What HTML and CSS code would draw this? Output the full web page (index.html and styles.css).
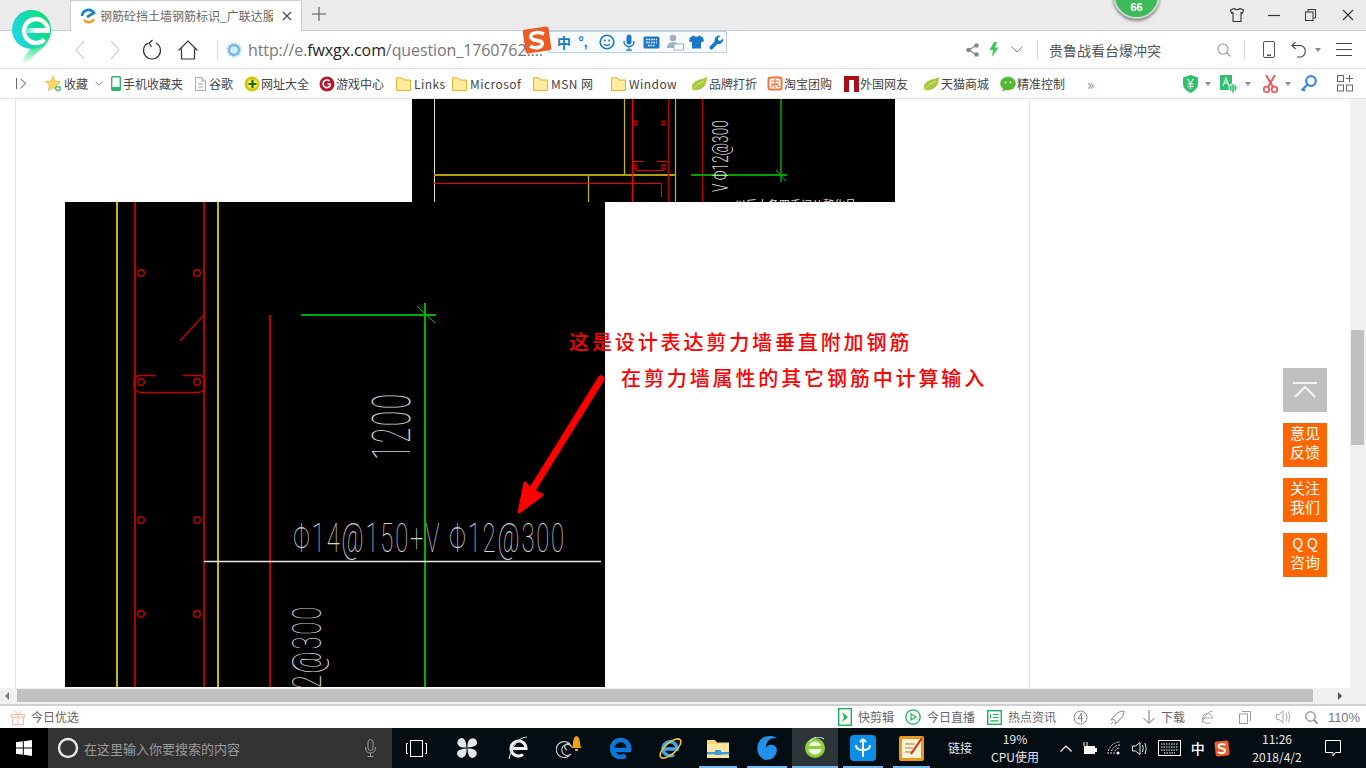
FILE: index.html
```html
<!DOCTYPE html>
<html lang="zh-CN">
<head>
<meta charset="utf-8">
<title>钢筋砼挡土墙钢筋标识_广联达服务新干线</title>
<link rel="stylesheet" href="styles.css">
</head>
<body>
<div class="app">
  <svg class="logo" width="48" height="56" viewBox="0 0 48 56">
    <defs>
      <linearGradient id="lg" x1="0" y1="0.7" x2="1" y2="0.3"><stop offset="0" stop-color="#22d4ea"/><stop offset="0.55" stop-color="#14dca4"/><stop offset="1" stop-color="#08e26a"/></linearGradient>
      <linearGradient id="lt" x1="0" y1="0" x2="0" y2="1"><stop offset="0" stop-color="#0ae070"/><stop offset="0.55" stop-color="#4ee89a"/><stop offset="1" stop-color="#e8fbf0"/></linearGradient>
      <linearGradient id="lb" x1="0" y1="0" x2="1" y2="0"><stop offset="0" stop-color="#fff" stop-opacity="0"/><stop offset="0.5" stop-color="#fff"/><stop offset="1" stop-color="#fff"/></linearGradient>
    </defs>
    <path d="M40 24 Q39 36 28 44 L17 55 H10 L22 38 Z" fill="url(#lt)"/>
    <circle cx="20.5" cy="22.5" r="19.5" fill="url(#lg)"/>
    <rect x="11" y="21" width="28" height="5" fill="url(#lb)"/>
    <path d="M37 23 A12 12 0 1 0 33.5 32.5" fill="none" stroke="#fff" stroke-width="4.4"/>
  </svg>

  <div class="badge">66</div>

  <div class="sogou">
    <svg class="sogou-s" width="30" height="28" viewBox="0 0 30 28"><rect x="2" y="2" width="26" height="24" rx="2" transform="rotate(-8 15 14)" fill="#ee5a24"/><path d="M22 8 Q15 5 10 8 Q7 11 11 13.5 L19 15.5 Q22 18 18 21 Q13 23 8 20" fill="none" stroke="#fff" stroke-width="3.6"/></svg>
    <div class="sogou-bar">
      <span class="sg-zh">中</span>
      <span class="sg-dot">°,</span>
      <svg width="16" height="16" viewBox="0 0 16 16"><circle cx="8" cy="8" r="6.8" fill="none" stroke="#1b78c8" stroke-width="1.6"/><circle cx="5.8" cy="6.5" r="1" fill="#1b78c8"/><circle cx="10.2" cy="6.5" r="1" fill="#1b78c8"/><path d="M4.8 10 Q8 13 11.2 10" fill="none" stroke="#1b78c8" stroke-width="1.2"/></svg>
      <svg width="14" height="17" viewBox="0 0 14 17"><rect x="4.5" y="0.5" width="5" height="10" rx="2.5" fill="#1b78c8"/><path d="M2 7 Q2 12.5 7 12.5 Q12 12.5 12 7 M7 12.5 V16 M4 16.2 H10" fill="none" stroke="#1b78c8" stroke-width="1.3"/></svg>
      <svg width="17" height="13" viewBox="0 0 17 13"><rect x="0.5" y="0.5" width="16" height="12" rx="1.5" fill="#1b78c8"/><path d="M3 3.5 H14 M3 6.5 H14 M5 9.5 H12" stroke="#fff" stroke-width="1.3" stroke-dasharray="1.6 .9"/></svg>
      <svg width="18" height="17" viewBox="0 0 18 17"><circle cx="7" cy="4" r="3.2" fill="#9db2c4"/><path d="M1 14 Q1 8 7 8 Q11 8 12 10 V14 Z" fill="#9db2c4"/><rect x="8" y="10" width="9.5" height="6" fill="#fff" stroke="#9db2c4"/></svg>
      <svg width="15" height="14" viewBox="0 0 15 14"><path d="M4.5 0.5 L1 2.5 L0 6.5 L3 7 V13.5 H12 V7 L15 6.5 L14 2.5 L10.5 0.5 Q7.5 3 4.5 .5 Z" fill="#1b78c8"/></svg>
      <svg width="15" height="15" viewBox="0 0 15 15"><path d="M14 3.5 L11 6 L9 5 L9 3 L11.5 0.8 A4.5 4.5 0 0 0 5.8 6.5 L.8 11.5 Q0 13 1 14 Q2 15 3.5 14 L8.5 9 A4.5 4.5 0 0 0 14 3.5 Z" fill="#1b78c8"/></svg>
    </div>
  </div>

  <header class="titlebar">
    <div class="tab">
      <svg class="tab-ico" width="16" height="16" viewBox="0 0 16 16"><path d="M2 8 A6.5 6.5 0 0 1 14 5 L7 9" fill="none" stroke="#1c7fd0" stroke-width="2.6"/><path d="M4 12 A6 6 0 0 0 14 11" fill="none" stroke="#f0a020" stroke-width="2.6"/></svg>
      <span class="tab-title">钢筋砼挡土墙钢筋标识_广联达服</span>
      <svg class="tab-x" width="10" height="10" viewBox="0 0 10 10"><path d="M1 1 L9 9 M9 1 L1 9" stroke="#444" stroke-width="1.1"/></svg>
    </div>
    <svg class="newtab" width="14" height="14" viewBox="0 0 14 14"><path d="M7 0 V14 M0 7 H14" stroke="#555" stroke-width="1.1"/></svg>
    <div class="winctl">
      <svg width="16" height="16" viewBox="0 0 16 16"><path d="M5 1.5 L1.5 3 L2.5 6 L4 5.5 V14.5 H12 V5.5 L13.5 6 L14.5 3 L11 1.5 Q8 4 5 1.5 Z" fill="none" stroke="#333" stroke-width="1.1"/></svg>
      <svg width="12" height="12" viewBox="0 0 12 12"><path d="M0 6.5 H12" stroke="#333" stroke-width="1.2"/></svg>
      <svg width="11" height="12" viewBox="0 0 11 12"><rect x="0.5" y="3" width="7.5" height="8.5" fill="#ebebeb" stroke="#333"/><path d="M3 3 V.5 H10.5 V9 H8" fill="none" stroke="#333"/></svg>
      <svg width="12" height="12" viewBox="0 0 12 12"><path d="M1 1 L11 11 M11 1 L1 11" stroke="#333" stroke-width="1.1"/></svg>
    </div>
  </header>

  <nav class="navbar">
    <svg width="12" height="20" class="n-back" viewBox="0 0 12 20"><path d="M10 1 L2 10 L10 19" fill="none" stroke="#d0d0d0" stroke-width="1.2"/></svg>
    <svg width="12" height="20" class="n-fwd" viewBox="0 0 12 20"><path d="M2 1 L10 10 L2 19" fill="none" stroke="#d0d0d0" stroke-width="1.2"/></svg>
    <svg width="20" height="22" class="n-reload" viewBox="0 0 20 22"><path d="M6 4 A8.5 8.5 0 1 0 14 4 M10.5 1 L7 4.2 L9.5 8" fill="none" stroke="#333" stroke-width="1.2"/></svg>
    <svg width="20" height="20" class="n-home" viewBox="0 0 20 20"><path d="M0.5 10.5 L10 1 L19.5 10.5 M3.5 8.5 V19 H16.5 V8.5" fill="none" stroke="#333" stroke-width="1.2"/></svg>
    <i class="n-div"></i>
    <svg width="16" height="16" class="n-globe" viewBox="0 0 16 16"><circle cx="8" cy="8" r="5" fill="#d8edfb" stroke="#6db8ea" stroke-width="2.4"/><circle cx="8" cy="8" r="6.8" fill="none" stroke="#a9d6f4" stroke-dasharray="2 1.6" stroke-width="1.6"/></svg>
    <div class="url">http://e.<b>fwxgx.com</b>/question_1760762....</div>
    <svg width="13" height="14" class="n-share" viewBox="0 0 13 14"><path d="M10 2.5 L3 7 L10 11.5" fill="none" stroke="#888" stroke-width="1.2"/><circle cx="10.5" cy="2.5" r="2.3" fill="#888"/><circle cx="2.5" cy="7" r="2.3" fill="#888"/><circle cx="10.5" cy="11.5" r="2.3" fill="#888"/></svg>
    <svg width="10" height="15" class="n-bolt" viewBox="0 0 10 15"><path d="M5 0 L0.5 8 H4 L3 15 L9.5 5.5 H6 L8 0 Z" fill="#3cc55a"/></svg>
    <svg width="12" height="7" class="n-chev" viewBox="0 0 12 7"><path d="M.5 .5 L6 6 L11.5 .5" fill="none" stroke="#888"/></svg>
    <i class="n-div2"></i>
    <div class="hot">贵鲁战看台爆冲突</div>
    <svg width="14" height="14" class="n-search" viewBox="0 0 14 14"><circle cx="6" cy="6" r="5" fill="none" stroke="#999" stroke-width="1.1"/><path d="M9.5 9.5 L13.5 13.5" stroke="#999" stroke-width="1.2"/></svg>
    <i class="n-div3"></i>
    <svg width="12" height="17" class="n-phone" viewBox="0 0 12 17"><rect x=".5" y=".5" width="11" height="16" rx="1.5" fill="none" stroke="#555"/><rect x="4" y="13.5" width="4" height="1.6" fill="#555"/></svg>
    <svg width="16" height="17" class="n-undo" viewBox="0 0 16 17"><path d="M1 4.5 H10 A6 6 0 0 1 10 16 H6 M4.5 .8 L1 4.5 L4.5 8" fill="none" stroke="#444" stroke-width="1.1"/></svg>
    <i class="caret n-caret"></i>
    <svg width="16" height="13" class="n-menu" viewBox="0 0 16 13"><path d="M0 .5 H16 M0 6.5 H16 M0 12.5 H16" stroke="#444"/></svg>
  </nav>

  <div class="bookmarks">
    <div class="bm bm-toggle"><svg width="12" height="11" viewBox="0 0 12 11"><path d="M.5 0 V11 M4.5 1 L10 5.5 L4.5 10" fill="none" stroke="#666"/></svg></div>
    <div class="bm"><svg width="18" height="18" viewBox="0 0 18 18"><path d="M8 1 L10.2 6 L15.5 6.6 L11.6 10.2 L12.7 15.5 L8 12.8 L3.3 15.5 L4.4 10.2 L.5 6.6 L5.8 6 Z" fill="#f8d860" stroke="#d8b030" stroke-width=".6"/><circle cx="13" cy="13.5" r="3" fill="#4cc080"/><path d="M13 11.5 V15.5 M11 13.5 H15" stroke="#fff"/></svg><span>收藏</span><svg class="bm-chev" width="8" height="5" viewBox="0 0 8 5"><path d="M.5 .5 L4 4 L7.5 .5" fill="none" stroke="#999"/></svg></div>
    <div class="bm"><svg width="10" height="15" viewBox="0 0 10 15"><rect x=".7" y=".7" width="8.6" height="13.6" rx="1" fill="#fff" stroke="#2fb86a" stroke-width="1.4"/><rect x=".7" y="11" width="8.6" height="3.3" fill="#2fb86a"/></svg><span>手机收藏夹</span></div>
    <div class="bm"><svg width="11" height="14" viewBox="0 0 11 14"><path d="M.5 .5 H7 L10.5 4 V13.5 H.5 Z M7 .5 V4 H10.5 M3 7 H8 M3 10 H8" fill="#fafafa" stroke="#aaa"/></svg><span>谷歌</span></div>
    <div class="bm"><svg width="16" height="16" viewBox="0 0 16 16"><circle cx="8" cy="8" r="7.5" fill="#d8c800"/><circle cx="8.5" cy="8" r="5" fill="#f6e85a"/><path d="M8.5 3.8 V12.2 M4.5 8 H12.5" stroke="#166c22" stroke-width="2.2"/></svg><span>网址大全</span></div>
    <div class="bm"><svg width="16" height="16" viewBox="0 0 16 16"><circle cx="8" cy="8" r="7.5" fill="#b01c2e"/><path d="M10.5 5 A3.8 3.8 0 1 0 11 10 V8 H8.5" fill="none" stroke="#fff" stroke-width="1.6"/></svg><span>游戏中心</span></div>
    <div class="bm bm-f"><svg class="fold" width="15" height="14" viewBox="0 0 15 14"><path d="M.5 13.5 V.8 H6 L7.5 3 H14.5 V13.5 Z" fill="#ffeb9c" stroke="#e0b030"/></svg><span>Links</span></div>
    <div class="bm bm-f"><svg class="fold" width="15" height="14" viewBox="0 0 15 14"><path d="M.5 13.5 V.8 H6 L7.5 3 H14.5 V13.5 Z" fill="#ffeb9c" stroke="#e0b030"/></svg><span>Microsof</span></div>
    <div class="bm bm-f"><svg class="fold" width="15" height="14" viewBox="0 0 15 14"><path d="M.5 13.5 V.8 H6 L7.5 3 H14.5 V13.5 Z" fill="#ffeb9c" stroke="#e0b030"/></svg><span>MSN 网</span></div>
    <div class="bm bm-f"><svg class="fold" width="15" height="14" viewBox="0 0 15 14"><path d="M.5 13.5 V.8 H6 L7.5 3 H14.5 V13.5 Z" fill="#ffeb9c" stroke="#e0b030"/></svg><span>Window</span></div>
    <div class="bm"><svg width="17" height="14" viewBox="0 0 17 14"><path d="M1 13 Q0 5 7 3 Q12 2 16 0 Q16 9 10 12 Q5 14 1 13 Z" fill="#a8c840"/><path d="M1 13 Q6 7 13 4" fill="none" stroke="#d8e890"/></svg><span>品牌打折</span></div>
    <div class="bm"><svg width="16" height="16" viewBox="0 0 16 16"><rect x=".5" y=".5" width="15" height="14" rx="3" fill="#f6763a"/><rect x="2.5" y="2.5" width="11" height="10" rx="1.5" fill="#fff"/><path d="M4 5 H12 M8 3 V12 M4 8 H12 M4 11 L7 8 M12 11 L9 8" stroke="#f6763a" stroke-width="1.1"/></svg><span>淘宝团购</span></div>
    <div class="bm"><svg width="15" height="16" viewBox="0 0 15 16"><path d="M0 0 H15 V16 H10 V4 H5 V16 H0 Z" fill="#a8101c"/></svg><span>外国网友</span></div>
    <div class="bm"><svg width="17" height="14" viewBox="0 0 17 14"><path d="M1 13 Q0 5 7 3 Q12 2 16 0 Q16 9 10 12 Q5 14 1 13 Z" fill="#a8c840"/><path d="M1 13 Q6 7 13 4" fill="none" stroke="#d8e890"/></svg><span>天猫商城</span></div>
    <div class="bm"><svg width="16" height="16" viewBox="0 0 16 16"><ellipse cx="8" cy="7.5" rx="7.8" ry="6.8" fill="#52b830"/><path d="M3 12 L2.5 15.5 L7 13 Z" fill="#52b830"/><circle cx="5.5" cy="6.5" r="1" fill="#fff"/><circle cx="10.5" cy="6.5" r="1" fill="#fff"/></svg><span>精准控制</span></div>
    <div class="bm bm-more">»</div>
    <div class="bm-tools">
      <svg width="15" height="18" viewBox="0 0 15 18"><path d="M7.5 0 L15 2.5 V9 Q15 14.5 7.5 18 Q0 14.5 0 9 V2.5 Z" fill="#2fbf6e"/><path d="M4.5 4 L7.5 8 L10.5 4 M7.5 8 V14 M4.5 9 H10.5 M4.5 11.5 H10.5" fill="none" stroke="#fff" stroke-width="1.1"/></svg>
      <i class="caret"></i>
      <svg class="t-gap t-a" width="18" height="18" viewBox="0 0 18 18"><rect x="0" y="0" width="12" height="15" fill="#2fbf6e"/><path d="M3 11 L6 3 L9 11 M4 8 H8" fill="none" stroke="#fff" stroke-width="1.1"/><circle cx="13" cy="13" r="4.5" fill="#fff"/><path d="M13 9 V18 M9 13 H17 M10.5 11 H15.5 V15 H10.5 Z" fill="none" stroke="#2fbf6e" stroke-width="1.2"/></svg>
      <i class="caret"></i>
      <svg class="t-gap" width="15" height="18" viewBox="0 0 15 18"><path d="M3 0 L10 12 M12 0 L5 12" stroke="#ee5a5a" stroke-width="2"/><circle cx="3.5" cy="14.5" r="2.8" fill="none" stroke="#ee5a5a" stroke-width="1.8"/><circle cx="11.5" cy="14.5" r="2.8" fill="none" stroke="#ee5a5a" stroke-width="1.8"/></svg>
      <i class="caret"></i>
      <svg class="t-gap t-k" width="17" height="17" viewBox="0 0 17 17"><circle cx="11" cy="6" r="4.8" fill="none" stroke="#3a8ae0" stroke-width="2.2"/><path d="M7.5 9.5 L1.5 15.5 M3 14 L5 16" stroke="#3a8ae0" stroke-width="2.2" fill="none"/></svg>
      <svg class="t-gap2" width="16" height="17" viewBox="0 0 16 17"><rect x=".5" y=".5" width="6" height="6" fill="none" stroke="#666"/><rect x=".5" y="10" width="6" height="6" fill="none" stroke="#666"/><rect x="9.5" y="10" width="6" height="6" fill="none" stroke="#666"/><path d="M12.5 0 V7 M9 3.5 H16" stroke="#666"/></svg>
    </div>
  </div>

  <div class="main">
    <div class="viewport">
      <article class="sheet">
        <svg class="cad cad-a" width="483" height="103" viewBox="412 99 483 103">
          <rect x="412" y="99" width="483" height="103" fill="#000"/>
          <path d="M434.5 99 V202" stroke="#d8d8d8"/>
          <path d="M624.5 99 V175 M675.5 99 V202 M588.5 175 V202" stroke="#c8b800" stroke-width="1.2"/>
          <path d="M434 175 H675" stroke="#b0a000" stroke-width="2"/>
          <path d="M632.5 99 V202 M434 183.5 H661.5 V197" stroke="#f00000" fill="none" stroke-width="1.2"/>
          <path d="M668.5 99 V202 M702.5 99 V202" stroke="#b00000" stroke-width="1.5"/>
          <path d="M632 161.5 H644 M657 161.5 H668 M636 170.5 H664" stroke="#f00000"/>
          <rect x="634" y="121" width="3" height="4" fill="none" stroke="#f00000"/>
          <rect x="662" y="121" width="3" height="4" fill="none" stroke="#f00000"/>
          <rect x="634" y="165" width="3" height="4" fill="none" stroke="#f00000"/>
          <rect x="662" y="165" width="3" height="4" fill="none" stroke="#f00000"/>
          <path d="M691 175 H787" stroke="#00a000" stroke-width="2"/>
          <path d="M781 99 V182" stroke="#00a000" stroke-width="1.6"/>
          <path d="M776 170 L786 181" stroke="#00c000"/>
          <text class="cad-t cad-t-sm" transform="translate(728 192) rotate(-90) scale(.62 1)">V Φ12@300</text>
          <text class="cad-note" x="735" y="209">以后人备四手记从整化县</text>
        </svg>
        <svg class="cad cad-b" width="540" height="485" viewBox="65 202 540 485">
          <rect x="65" y="202" width="540" height="485" fill="#000"/>
          <path d="M117 202 V687 M218 202 V687" stroke="#c8b800" stroke-width="2"/>
          <path d="M135 202 V687 M204 202 V687 M270 315 V687" stroke="#b40000" stroke-width="2"/>
          <g fill="none" stroke="#c80000" stroke-width="1.4">
            <circle cx="141" cy="273" r="3.3"/><circle cx="197" cy="273" r="3.3"/>
            <circle cx="141" cy="382" r="3.3"/><circle cx="197" cy="382" r="3.3"/>
            <circle cx="141" cy="520" r="3.3"/><circle cx="197" cy="520" r="3.3"/>
            <circle cx="141" cy="614" r="3.3"/><circle cx="197" cy="614" r="3.3"/>
            <path d="M203 316 L180 341"/>
            <path d="M156 375.5 H140 Q134 376 134 381 V386 Q135 392 141 392.5 H198 Q205 392 205 386 V381 Q205 376 199 375.5 H183"/>
          </g>
          <path d="M301 315 H436" stroke="#00b000" stroke-width="2"/>
          <path d="M425 303 V687" stroke="#00b000" stroke-width="2"/>
          <path d="M417 306 L435 323" stroke="#00d000"/>
          <path d="M204 561.5 H601" stroke="#e8e8e8" stroke-width="1.4"/>
          <text class="cad-t cad-t-main" transform="translate(293 552) scale(.58 1)">Φ14@150+V Φ12@300</text>
          <text class="cad-t cad-t-big" transform="translate(410 460) rotate(-90) scale(.52 1)">1200</text>
          <text class="cad-t cad-t-main" transform="translate(321 722) rotate(-90) scale(.58 1)">Φ12@300</text>
          <path d="M601 379 L532 490" stroke="#f00" stroke-width="7" stroke-linecap="round"/>
          <path d="M519 512 L525 483 L530 489 L542 495 Z" fill="#f00" stroke="#f00" stroke-width="3" stroke-linejoin="round"/>
        </svg>
        <div class="note note-1">这是设计表达剪力墙垂直附加钢筋</div>
        <div class="note note-2">在剪力墙属性的其它钢筋中计算输入</div>
      </article>
      <aside class="float">
        <div class="f-top"><svg width="24" height="16" viewBox="0 0 24 16"><path d="M0 1 H24 M2 15 L12 5 L22 15" fill="none" stroke="#f4f4f4" stroke-width="2"/></svg></div>
        <div class="f-btn">意见<br>反馈</div>
        <div class="f-btn">关注<br>我们</div>
        <div class="f-btn">Q Q<br>咨询</div>
      </aside>
    </div>
    <div class="vscroll"><div class="v-thumb"></div></div>
  </div>

  <div class="hscroll">
    <i class="arr-l"></i>
    <div class="h-thumb"></div>
    <i class="arr-r"></i>
  </div>

  <footer class="status">
    <div class="st-left"><svg width="16" height="15" viewBox="0 0 16 15"><path d="M1 4.5 H15 V7 H1 Z M2.5 7 V14.5 H13.5 V7 M8 4.5 V14.5 M8 4.5 L4.5 .8 M8 4.5 L11.5 .8" fill="none" stroke="#f8b8a0"/></svg><span>今日优选</span></div>
    <div class="st"><svg width="14" height="18" viewBox="0 0 14 18"><rect x=".7" y=".7" width="12.6" height="16.6" fill="none" stroke="#19b35a" stroke-width="1.4"/><path d="M4 4 L10 9 L4 14 L6 9 Z" fill="#19b35a"/></svg><span>快剪辑</span></div>
    <div class="st"><svg width="16" height="16" viewBox="0 0 16 16"><circle cx="8" cy="8" r="7.2" fill="none" stroke="#19b35a" stroke-width="1.3"/><path d="M6 5 L11 8 L6 11 Z" fill="none" stroke="#19b35a" stroke-width="1.2"/></svg><span>今日直播</span></div>
    <div class="st"><svg width="15" height="15" viewBox="0 0 15 15"><rect x=".7" y=".7" width="13.6" height="13.6" fill="none" stroke="#19b35a" stroke-width="1.4"/><path d="M3.5 4.5 V8 M6 4.5 H11.5 M6 7.5 H11.5 M3.5 10.8 H11.5" stroke="#19b35a" stroke-width="1.2"/></svg><span>热点资讯</span></div>
    <div class="st"><svg width="15" height="15" viewBox="0 0 15 15"><circle cx="7.5" cy="7.5" r="6.5" fill="none" stroke="#888"/><path d="M8.5 3 L5 8.5 H10 M8.5 3 V12" fill="none" stroke="#888"/></svg></div>
    <div class="st"><svg width="15" height="15" viewBox="0 0 15 15"><path d="M14 1 Q8 1 5 6 L3 7 L1 10 L4 9.5 L5.5 11 L5 14 L8 12 L9 10 Q14 7 14 1 Z M3 12 L1 14" fill="none" stroke="#888"/></svg></div>
    <div class="st"><svg width="12" height="14" viewBox="0 0 12 14"><path d="M6 0 V13 M.5 8 L6 13.5 L11.5 8" fill="none" stroke="#777"/></svg><span>下载</span></div>
    <div class="st"><svg width="14" height="15" viewBox="0 0 14 15"><path d="M1.5 8 H11.5 A5 5 0 1 0 10 12 M12 1 Q4 2 1 13" fill="none" stroke="#aaa"/></svg></div>
    <div class="st"><svg width="12" height="13" viewBox="0 0 12 13"><rect x=".5" y="3" width="8" height="9.5" fill="none" stroke="#999"/><path d="M3 .5 H11.5 V10" fill="none" stroke="#999"/></svg></div>
    <div class="st"><svg width="15" height="14" viewBox="0 0 15 14"><path d="M.5 4.5 H3 L7 1 V13 L3 9.5 H.5 Z M10 3 Q12 7 10 11 M12.5 1.5 Q15 7 12.5 12.5" fill="none" stroke="#aaa"/></svg></div>
    <div class="st"><svg width="13" height="13" viewBox="0 0 13 13"><circle cx="5.5" cy="5.5" r="4.7" fill="none" stroke="#666"/><path d="M9 9 L12.5 12.5" stroke="#666" stroke-width="1.2"/></svg><span class="st-zoom">110%</span></div>
  </footer>

  <div class="taskbar">
    <div class="tb-start"><svg width="16" height="16" viewBox="0 0 16 16"><path d="M0 2.3 L6.8 1.3 V7.5 H0 Z M7.8 1.2 L16 0 V7.5 H7.8 Z M0 8.5 H6.8 V14.7 L0 13.7 Z M7.8 8.5 H16 V16 L7.8 14.8 Z" fill="#fff"/></svg></div>
    <div class="tb-search">
      <svg width="22" height="22" viewBox="0 0 22 22"><circle cx="11" cy="11" r="9" fill="none" stroke="#e8e8e8" stroke-width="2.4"/></svg>
      <span>在这里输入你要搜索的内容</span>
      <svg class="tb-mic" width="11" height="18" viewBox="0 0 11 18"><rect x="3" y=".5" width="5" height="11" rx="2.5" fill="none" stroke="#999"/><path d="M.5 8 Q.5 14 5.5 14 Q10.5 14 10.5 8 M5.5 14 V17.5 M2.5 17.5 H8.5" fill="none" stroke="#999"/></svg>
    </div>
    <div class="tb-apps">
      <div class="tb-i"><svg width="21" height="17" viewBox="0 0 21 17"><rect x="4.5" y=".5" width="12" height="16" fill="none" stroke="#fff"/><path d="M2 3.5 H.5 V13.5 H2 M19 3.5 H20.5 V13.5 H19" fill="none" stroke="#fff"/></svg></div>
      <div class="tb-i"><svg width="22" height="22" viewBox="0 0 24 24"><g fill="#e4e8e8"><path d="M11.5 11.5 Q3 12 1.5 7 Q1 2 6 1 Q11 1 11.5 11.5 Z"/><path d="M12.5 11.5 Q12 3 17 1.5 Q22 1 23 6 Q23 11 12.5 11.5 Z"/><path d="M12.5 12.5 Q21 12 22.5 17 Q23 22 18 23 Q13 23 12.5 12.5 Z"/><path d="M11.5 12.5 Q12 21 7 22.5 Q2 23 1 18 Q1 13 11.5 12.5 Z"/></g></svg></div>
      <div class="tb-i"><svg width="22" height="24" viewBox="0 0 22 24"><path d="M5 12.5 H19 A7.5 7.5 0 1 0 16 18.5" fill="none" stroke="#f4f4f4" stroke-width="3"/><path d="M20 1 Q7 2 2 23" fill="none" stroke="#ccc" stroke-width="1.2"/></svg></div>
      <div class="tb-i tb-bell"><svg width="28" height="26" viewBox="0 0 28 26"><path d="M13 21 A8 8 0 1 1 14 9 M15 19 A5.5 5.5 0 1 1 15 11 A3.2 3.2 0 1 0 11 15" fill="none" stroke="#ccc" stroke-width="1.2"/><path d="M15 13 Q17 12 17 7 Q18 1 20.5 1 Q23 1 24 7 Q24 12 26 13 Z M19 14 H22 V16 H19 Z" fill="#e8a417"/></svg></div>
      <div class="tb-i"><svg width="22" height="22" viewBox="0 0 22 22"><path d="M3 13 H19 A8.5 8.5 0 1 0 15.5 18.5" fill="none" stroke="#0a78d8" stroke-width="4.6"/></svg></div>
      <div class="tb-i"><svg width="25" height="25" viewBox="0 0 25 25"><path d="M6 13 H19 A7 7 0 1 0 16 18.5" fill="none" stroke="#3fa6e8" stroke-width="3.4"/><ellipse cx="12.5" cy="12.5" rx="13" ry="5.5" transform="rotate(-42 12.5 12.5)" fill="none" stroke="#f2c230" stroke-width="1.6"/></svg></div>
      <div class="tb-i run"><svg width="22" height="21" viewBox="0 0 22 21"><path d="M0 2 H8 L10 4.5 H22 V20 H0 Z" fill="#f3d67c"/><rect y="6" width="22" height="14" fill="#fbe6a0"/><path d="M8 12 H14 V17 H8 Z" fill="#3a9de0"/><rect y="14" width="22" height="2.4" fill="#3a9de0"/></svg></div>
      <div class="tb-i run"><svg width="24" height="26" viewBox="0 0 24 26"><path d="M17 1 Q6 0 3 9 Q0 20 10 25 Q21 25 22 15 Q21 9 14 10 Q10 12 12 16 Q15 18 16 15 Q8 13 13 6 Q15 3 22 3 Z" fill="#2090e8"/></svg></div>
      <div class="tb-i run run-active"><svg width="22" height="22" viewBox="0 0 22 22"><circle cx="11" cy="11" r="10" fill="#8ccf3a"/><circle cx="11" cy="11" r="6.6" fill="#f0f8e0"/><rect x="3" y="9" width="16" height="3" fill="#8ccf3a"/><path d="M6 4 Q13 -3 20 2" fill="none" stroke="#dff" stroke-width="1"/></svg></div>
      <div class="tb-i run"><svg width="26" height="26" viewBox="0 0 26 26"><rect width="26" height="26" rx="4" fill="#0a8fe8"/><path d="M13 4 V22 M6 10 Q6 15 13 15 Q20 15 20 10 M13 4 L10 7 M13 4 L16 7" fill="none" stroke="#fff" stroke-width="2"/></svg></div>
      <div class="tb-i run"><svg width="25" height="25" viewBox="0 0 25 25"><rect width="25" height="25" rx="2" fill="#e89a20"/><rect x="3" y="3" width="19" height="19" fill="#f9f0d8"/><path d="M6 8 H16 M6 12 H14 M6 16 H13" stroke="#a88040"/><path d="M23 2 L12 18" stroke="#c83818" stroke-width="2.2"/></svg></div>
      <div class="tb-t">链接</div>
      <div class="tb-t">19%<br>CPU使用</div>
    </div>
    <div class="tb-tray">
      <svg width="12" height="7" viewBox="0 0 12 7"><path d="M.5 6.5 L6 1 L11.5 6.5" fill="none" stroke="#fff" stroke-width="1.2"/></svg>
      <svg width="16" height="14" viewBox="0 0 16 14"><rect x="3" y="5" width="11" height="8" fill="#fff"/><path d="M3 1 V5 M6 1 V5" stroke="#fff"/><rect x="14" y="7" width="2" height="4" fill="#fff"/></svg>
      <svg width="16" height="14" viewBox="0 0 16 14"><path d="M1 13 A12 12 0 0 1 13 1 M4 13 A9 9 0 0 1 13 4 M7 13 A6 6 0 0 1 13 7" fill="none" stroke="#ddd" stroke-dasharray="2 1"/><circle cx="11" cy="12" r="1.5" fill="#fff"/></svg>
      <svg width="17" height="15" viewBox="0 0 17 15"><path d="M.5 5 H3.5 L8 1.5 V13.5 L3.5 10 H.5 Z M10.5 4 Q12 7.5 10.5 11 M13 2 Q15.5 7.5 13 13" fill="none" stroke="#eee"/></svg>
      <svg width="23" height="16" viewBox="0 0 23 16"><rect x=".5" y=".5" width="22" height="15" fill="none" stroke="#fff"/><path d="M3 4 H20 M3 7 H20 M3 10 H20 M6 13 H17" stroke="#fff" stroke-dasharray="1.5 1"/></svg>
      <span class="tray-zh">中</span>
      <svg width="16" height="17" viewBox="0 0 16 17"><rect x="1" y="1" width="14" height="15" rx="2" transform="rotate(-6 8 8)" fill="#ee5a24"/><path d="M11.5 5 Q8 3 5 5 Q3.5 7 6 8 L10 9 Q12 11 10 12.5 Q7 14 4 12" fill="none" stroke="#fff" stroke-width="2"/></svg>
    </div>
    <div class="tb-clock">11:26<br>2018/4/2</div>
    <div class="tb-noti"><svg width="16" height="17" viewBox="0 0 16 17"><path d="M.5 .5 H15.5 V12.5 H10.5 L8 16 L8 12.5 H.5 Z" fill="none" stroke="#fff"/></svg></div>
  </div>
</div>
</body>
</html>
```
FILE: styles.css
```css
* { box-sizing: border-box; }
html, body { margin: 0; height: 100%; overflow: hidden; background: #fff; }
.app {
  position: relative; width: 1366px; height: 768px; display: flex; flex-direction: column;
  overflow: hidden; font: 12px/1 "Noto Sans CJK SC", "Noto Sans", sans-serif; color: #444;
}
svg { display: block; flex: none; }
i { display: block; flex: none; }

/* overlays */
.logo { position: absolute; left: 11px; top: 7px; z-index: 5; }
.badge {
  position: absolute; left: 1113px; top: -28px; width: 47px; height: 47px; border-radius: 50%;
  background: #3dbb5b; border: 2px solid #cfd8d0; box-shadow: 0 2px 3px rgba(0,0,0,.45);
  color: #fff; font: bold 11px/1 "Liberation Sans", sans-serif; text-align: center; padding-top: 28px; z-index: 5;
}
.sogou { position: absolute; left: 522px; top: 26px; z-index: 6; display: flex; align-items: flex-start; }
.sogou-s { position: relative; z-index: 2; }
.sogou-bar {
  margin: 5px 0 0 -4px; width: 179px; height: 22px; padding-left: 4px;
  display: grid; grid-template-columns: 22px 16px 32px 12px 32px 16px 26px 14px; justify-items: center; align-items: center;
  background: #f7fafd; border: 1px solid #b7d3ea; color: #1b78c8;
}
.sg-zh { font-size: 14px; font-weight: 700; }
.sg-dot { font: bold 14px/1 "Liberation Sans", sans-serif; }

/* title bar */
.titlebar { height: 31px; flex: none; background: #ebebeb; border-bottom: 1px solid #c9ced3; display: flex; align-items: flex-end; padding-left: 70px; }
.tab {
  width: 232px; height: 31px; background: #fff; border: 1px solid #c9ced3; border-bottom: 0; margin-bottom: -1px;
  display: flex; align-items: center; padding-left: 9px; position: relative;
}
.tab-ico { margin-right: 4px; }
.tab-title { width: 173px; white-space: nowrap; overflow: hidden; color: #666; font-size: 12px; line-height: 18px; }
.tab-x { margin-left: 9px; }
.newtab { margin: 0 0 9px 10px; }
.winctl { margin-left: auto; height: 30px; display: grid; grid-template-columns: 37px 37px 37px 37px; justify-items: center; align-items: center; width: 149px; margin-right: -1px; }

/* nav */
.navbar { height: 37px; flex: none; background: #fff; display: flex; align-items: center; padding-left: 74px; }
.n-back { margin-right: 23px; }
.n-fwd { margin-right: 21px; }
.n-reload { margin-right: 16px; }
.n-home { margin-right: 19px; }
.n-div { width: 1px; height: 20px; background: #d8d8d8; margin-right: 8px; }
.n-globe { margin-right: 6px; }
.url { width: 718px; color: #777; font: 16px/1 "Open Sans", sans-serif; letter-spacing: -.1px; white-space: nowrap; }
.url b { font-weight: 400; color: #222; }
.n-share { margin-right: 10px; }
.n-bolt { margin-right: 12px; }
.n-chev { margin-right: 14px; }
.n-div2 { width: 1px; height: 20px; background: #d8d8d8; margin-right: 11px; }
.hot { width: 168px; font-size: 14px; color: #555; white-space: nowrap; }
.n-search { margin-right: 13px; }
.n-div3 { width: 1px; height: 20px; background: #d8d8d8; margin-right: 18px; }
.n-phone { margin-right: 16px; }
.n-undo { margin-right: 8px; }
.caret { width: 0; height: 0; border: 3px solid transparent; border-top: 4px solid #888; border-bottom: 0; }
.n-caret { margin-right: 15px; }

/* bookmarks */
.bookmarks {
  height: 31px; flex: none; background: #fff; border-top: 1px solid #e0e0e0; border-bottom: 1px solid #e4e4e4;
  display: grid; grid-template-columns: 45px 66px 84px 49px 75px 77px 56px 81px 78px 80px 76px 77px 79px 77px 85px 95px 1fr; align-items: center;
}
.bm { display: flex; align-items: center; gap: 1px; white-space: nowrap; color: #444; font-size: 12px; min-width: 0; line-height: 16px; }
.bm-toggle { padding-left: 16px; }
.bm-chev { margin-left: 6px; }
.bm:nth-child(3) { gap: 2px; }
.bm:nth-child(4) { gap: 3px; }
.bm .fold { margin-right: 2px; }
.bm-f span { letter-spacing: .45px; }
.bm-more { color: #888; font-size: 15px; padding-left: 2px; }
.bm-tools { display: flex; align-items: center; margin-left: 3px; }
.bm-tools .caret { margin-left: 7px; }
.t-gap { margin-left: 12px; }
.t-a { margin-left: 9px; }
.t-k { margin-left: 9px; }
.t-gap2 { margin-left: 20px; }

/* main */
.main { flex: none; height: 589px; display: flex; }
.viewport { position: relative; width: 1350px; height: 589px; overflow: hidden; background: #fff; }
.sheet { position: relative; margin-left: 15px; width: 1015px; height: 589px; border-left: 1px solid #e2e2e2; border-right: 1px solid #e2e2e2; }
.cad { display: block; }
.cad-a { margin-left: 396px; }
.cad-b { margin-left: 49px; }
.cad-t { fill: #d4d4d4; font: 100 41px "Roboto", sans-serif; }
.cad-t-main { letter-spacing: 3.2px; }
.cad-t-big { font-size: 54px; letter-spacing: 3px; }
.cad-t-sm { font-size: 22px; font-weight: 300; }
.cad-note { fill: #e0e0e0; font-size: 11px; font-family: "Noto Sans CJK SC", sans-serif; }
.note { position: absolute; color: #f00; font-size: 20px; line-height: 24px; letter-spacing: 2.88px; font-weight: 500; white-space: nowrap; }
.note-1 { left: 553px; top: 231px; }
.note-2 { left: 605px; top: 267px; }
.float { position: absolute; left: 1283px; top: 269px; width: 44px; display: flex; flex-direction: column; gap: 11px; }
.f-top { height: 44px; background: #c0c0c0; display: flex; align-items: center; justify-content: center; }
.f-btn { height: 44px; background: #ff6600; color: #fff; font-size: 15px; line-height: 19px; text-align: center; margin: 0; }

.vscroll { width: 16px; background: #f0f0f0; padding: 231px 2px 0 1px; }
.v-thumb { height: 115px; background: #c0c0c0; }

.hscroll { height: 16px; flex: none; background: #f0f0f0; display: flex; align-items: center; position: relative; border-bottom: 1px solid #f0f0f0; }
.h-thumb { margin-left: 8px; width: 1296px; height: 13px; background: #c0c0c0; }
.arr-l { margin-left: 5px; width: 0; height: 0; border: 4px solid transparent; border-right: 4px solid #777; border-left: 0; }
.arr-r { margin-left: 25px; width: 0; height: 0; border: 4px solid transparent; border-left: 4px solid #555; border-right: 0; }

/* status */
.status {
  height: 24px; flex: none; background: #fff; border-top: 2px solid #d0d0d0;
  display: grid; grid-template-columns: 838px 67px 82px 86px 37px 33px 58px 38px 37px 29px 1fr; align-items: center; color: #666;
}
.st-left { display: flex; align-items: center; gap: 5px; padding-left: 10px; }
.st { display: flex; align-items: center; gap: 6px; white-space: nowrap; }
.st-zoom { font: 13px/1 "Liberation Sans", sans-serif; color: #777; margin-left: 4px; letter-spacing: -.1px; }

/* taskbar */
.taskbar { height: 40px; flex: none; background: #040d12; display: flex; color: #e8e8e8; }
.taskbar > * { flex: none; }
.tb-start { width: 48px; background: #000; display: flex; align-items: center; justify-content: center; }
.tb-search { width: 344px; background: #333; display: flex; align-items: center; padding-left: 9px; color: #9a9a9a; font-size: 13px; gap: 5px; }
.tb-mic { margin-left: auto; margin-right: 16px; }
.tb-apps { display: grid; grid-template-columns: 49px 51px 52px 52px 50px 48px 48px 50px 46px 50px 47px 50px 60px; height: 40px; align-items: center; }
.tb-i { position: relative; height: 40px; display: flex; align-items: center; justify-content: center; }
.run::after { content: ""; position: absolute; left: 5px; right: 5px; bottom: 0; height: 2px; background: #76b9ed; }
.run-active { background: #2c3438; }
.run-active::after { left: 0; right: 0; }
.tb-t { text-align: center; font-size: 12px; line-height: 18px; color: #e8e8e8; }
.tb-tray { margin-left: 15px; width: 170px; display: flex; align-items: center; justify-content: space-between; }
.tray-zh { font-size: 14px; font-weight: 500; color: #fff; }
.tb-clock { margin-left: 12px; width: 70px; text-align: center; font-size: 12px; line-height: 18px; padding-top: 2px; }
.tb-noti { margin-left: 1px; width: 40px; display: flex; align-items: center; justify-content: center; }
```
